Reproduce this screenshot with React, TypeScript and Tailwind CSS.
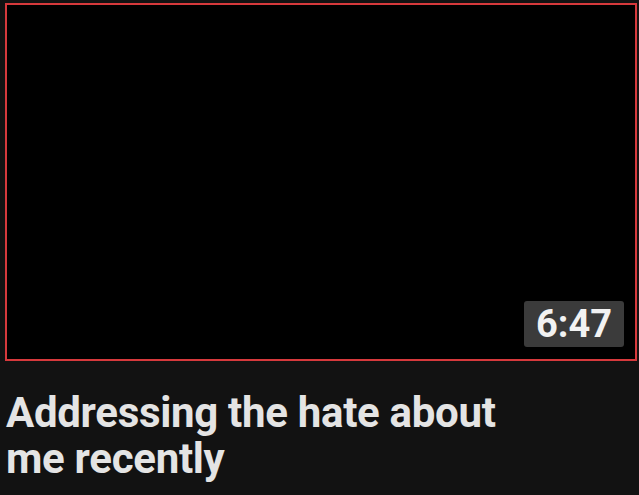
export default function App() {
  return (
    <div className="h-[495px] w-[639px] overflow-hidden bg-[#121212] pl-[5px] pt-[3px] font-['Roboto',sans-serif]">
      <div className="relative h-[358px] w-[632px] border-2 border-[#d6393c] bg-black">
        <div className="absolute bottom-[12px] right-[11px] flex h-[46px] w-[100px] items-center justify-center rounded-[3px] bg-[#3b3b3b] text-[38px] font-bold leading-none text-[#f2f2f2]">
          6:47
        </div>
      </div>
      <h1 className="mt-[29px] w-[540px] pl-[1px] text-[42px] font-bold leading-[46px] tracking-[-0.3px] text-[#e4e4e4]">
        Addressing the hate about me recently
      </h1>
    </div>
  );
}
